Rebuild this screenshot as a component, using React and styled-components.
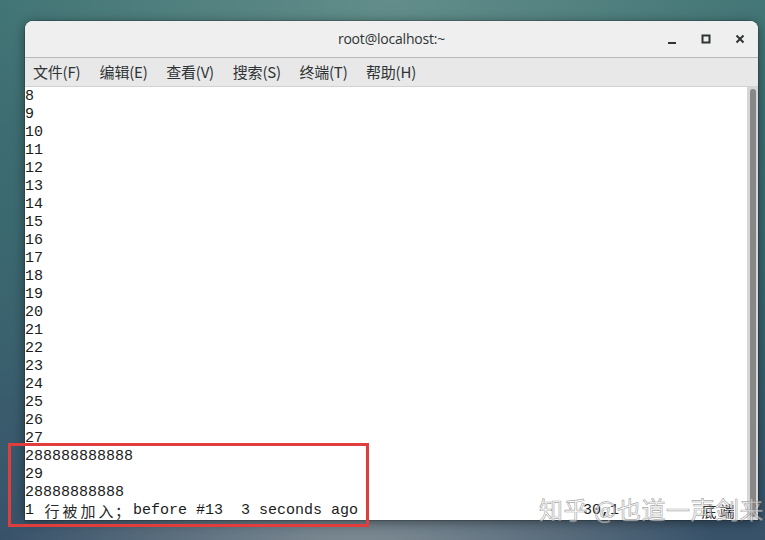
import React from "react";
import styled, { createGlobalStyle } from "styled-components";

const GlobalStyle = createGlobalStyle`
  html, body {
    margin: 0;
    padding: 0;
    width: 765px;
    height: 540px;
    overflow: hidden;
  }
  body {
    background:
      radial-gradient(ellipse 420px 260px at 390px 0px, rgba(110,150,145,0.75), rgba(110,150,145,0) 100%),
      radial-gradient(ellipse 360px 160px at 360px 560px, rgba(140,150,155,0.9), rgba(140,150,155,0) 100%),
      linear-gradient(180deg, #3f7374 0%, #3b6870 45%, #38526a 100%);
    font-family: "Noto Sans", "Noto Sans CJK SC", sans-serif;
  }
`;

const Desktop = styled.div`
  position: relative;
  width: 765px;
  height: 540px;
  padding: 21px 7px 0 25px;
  box-sizing: border-box;
`;

const Window = styled.div`
  width: 733px;
  height: 499px;
  display: flex;
  flex-direction: column;
  border-radius: 8px 8px 0 0;
  overflow: hidden;
  background: #ffffff;
  box-shadow: 0 2px 12px rgba(0, 0, 0, 0.45), 0 0 0 1px rgba(0, 0, 0, 0.15);
`;

const TitleBar = styled.div`
  position: relative;
  height: 37px;
  flex: none;
  display: flex;
  align-items: center;
  justify-content: center;
  padding-bottom: 2px;
  box-sizing: border-box;
  background: #efefef;
  border-bottom: 1px solid #b9b9b9;
`;

const Title = styled.div`
  font-family: "Open Sans", "Noto Sans", sans-serif;
  font-size: 14px;
  color: #2e3436;
  letter-spacing: -0.2px;
`;

const Controls = styled.div`
  position: absolute;
  right: 10px;
  top: 0;
  height: 35px;
  display: flex;
  align-items: center;
  gap: 18px;
`;

const CtrlBtn = styled.div`
  width: 16px;
  height: 16px;
  display: flex;
  align-items: center;
  justify-content: center;
`;

const MenuBar = styled.div`
  height: 29px;
  flex: none;
  display: flex;
  align-items: center;
  padding-left: 8px;
  padding-bottom: 1px;
  box-sizing: border-box;
  background: #e8e8e8;
  border-bottom: 1px solid #d2d2d2;
`;

const MenuItem = styled.div`
  width: 66.6px;
  font-family: "Noto Sans CJK SC", "Noto Sans", sans-serif;
  font-size: 15px;
  color: #2e3436;
  white-space: nowrap;
  letter-spacing: -0.2px;
`;

const Body = styled.div`
  flex: 1;
  display: flex;
  min-height: 0;
`;

const Terminal = styled.div`
  position: relative;
  flex: 1;
  padding-top: 1px;
  font-family: "Liberation Mono", "Noto Sans CJK SC", monospace;
  font-size: 15px;
  color: #1c1c1c;
  background: #ffffff;
`;

const Line = styled.div`
  height: 18px;
  line-height: 18px;
  white-space: pre;
  display: flex;
`;

const Seg = styled.span`
  flex: none;
  width: ${(p) => p.$cols * 9}px;
  height: 18px;
  line-height: 18px;
  white-space: pre;
  display: inline-block;
`;

const Wide = styled.span`
  display: inline-block;
  vertical-align: top;
  width: 18px;
  height: 18px;
  line-height: 18px;
  text-align: ${(p) => (p.$left ? "left" : "center")};
  font-family: "Noto Sans CJK SC", sans-serif;
  font-size: 15px;
  color: #2a2a2a;
`;

const Scrollbar = styled.div`
  width: 11px;
  flex: none;
  background: #d6d6d6;
  display: flex;
  justify-content: center;
  padding: 2px 0 3px;
  box-sizing: border-box;
`;

const Thumb = styled.div`
  width: 6px;
  height: 100%;
  border-radius: 3px;
  background: #878787;
`;

const Highlight = styled.div`
  position: absolute;
  left: 8px;
  top: 443px;
  width: 355px;
  height: 78px;
  border: 3px solid #e23d3d;
`;

const Watermark = styled.div`
  position: absolute;
  left: 539px;
  top: 491px;
  font-family: "Noto Sans CJK SC", sans-serif;
  font-size: 24px;
  letter-spacing: 0.5px;
  color: rgba(255, 255, 255, 0.5);
  -webkit-text-stroke: 0.7px rgba(130, 130, 130, 0.7);
  white-space: nowrap;
  pointer-events: none;
`;

const numbers = [];
for (let i = 8; i <= 27; i++) numbers.push(String(i));
numbers.push("288888888888", "29", "28888888888");

const menus = ["文件(F)", "编辑(E)", "查看(V)", "搜索(S)", "终端(T)", "帮助(H)"];

export default function App() {
  return (
    <>
      <GlobalStyle />
      <Desktop>
        <Window>
          <TitleBar>
            <Title>root@localhost:~</Title>
            <Controls>
              <CtrlBtn>
                <svg width="10" height="10" viewBox="0 0 10 10">
                  <rect x="1" y="8" width="8" height="2" fill="#2e3436" />
                </svg>
              </CtrlBtn>
              <CtrlBtn>
                <svg width="10" height="10" viewBox="0 0 10 10">
                  <rect x="1.5" y="1.5" width="7" height="7" fill="none" stroke="#2e3436" strokeWidth="2" />
                </svg>
              </CtrlBtn>
              <CtrlBtn>
                <svg width="10" height="10" viewBox="0 0 10 10">
                  <path d="M1.5 1.5 L8.5 8.5 M8.5 1.5 L1.5 8.5" stroke="#2e3436" strokeWidth="2" />
                </svg>
              </CtrlBtn>
            </Controls>
          </TitleBar>
          <MenuBar>
            {menus.map((m) => (
              <MenuItem key={m}>{m}</MenuItem>
            ))}
          </MenuBar>
          <Body>
            <Terminal>
              {numbers.map((n, i) => (
                <Line key={i}>{n}</Line>
              ))}
              <Line>
                <Seg $cols={62}>
                  {"1 "}
                  <Wide>行</Wide>
                  <Wide>被</Wide>
                  <Wide>加</Wide>
                  <Wide>入</Wide>
                  <Wide $left>；</Wide>
                  {"before #13  3 seconds ago"}
                </Seg>
                <Seg $cols={13}>30,1</Seg>
                <Seg $cols={4}>
                  <Wide>底</Wide>
                  <Wide>端</Wide>
                </Seg>
              </Line>
            </Terminal>
            <Scrollbar>
              <Thumb />
            </Scrollbar>
          </Body>
        </Window>
        <Highlight />
        <Watermark>知乎 @也道一声剑来</Watermark>
      </Desktop>
    </>
  );
}
